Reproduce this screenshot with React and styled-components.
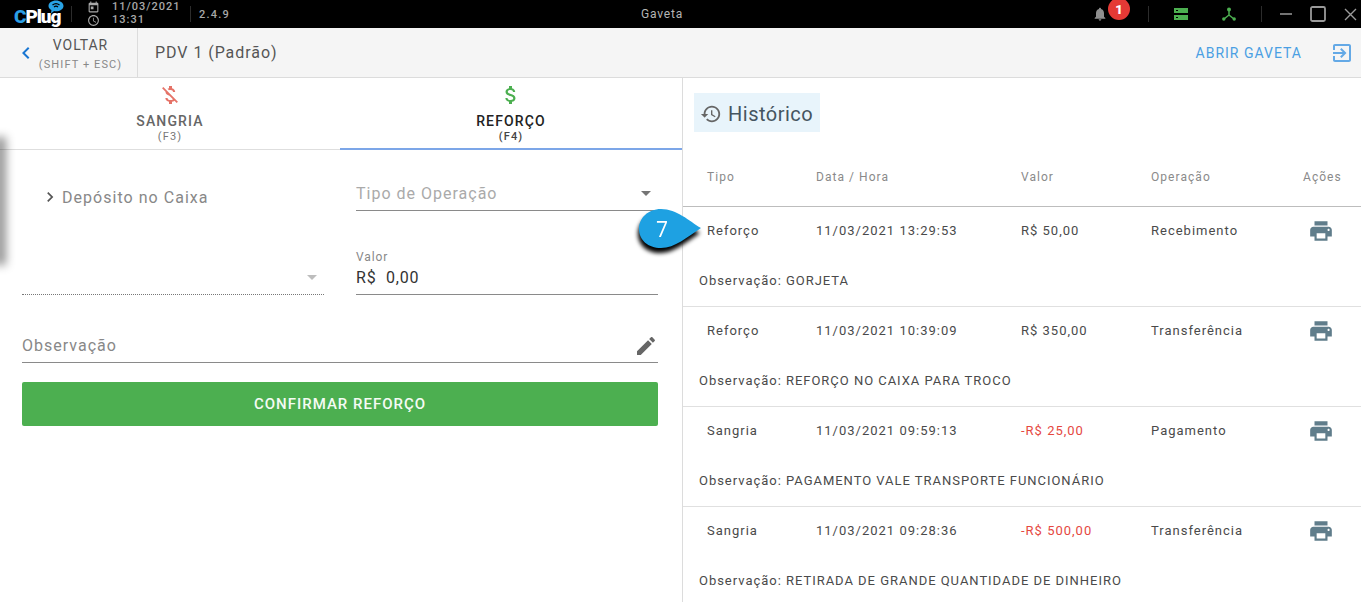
import React from 'react'
import styled, { createGlobalStyle } from 'styled-components'

const paths = {
  print: 'M19 8H5c-1.66 0-3 1.34-3 3v6h4v4h12v-4h4v-6c0-1.66-1.34-3-3-3zm-3 11H8v-5h8v5zm3-7c-.55 0-1-.45-1-1s.45-1 1-1 1 .45 1 1-.45 1-1 1zm-1-9H6v4h12V3z',
  history: 'M13 3c-4.97 0-9 4.03-9 9H1l3.89 3.89.07.14L9 12H6c0-3.87 3.13-7 7-7s7 3.13 7 7-3.13 7-7 7c-1.93 0-3.68-.79-4.94-2.06l-1.42 1.42C8.27 19.99 10.51 21 13 21c4.97 0 9-4.03 9-9s-4.03-9-9-9zm-1 5v5l4.28 2.54.72-1.21-3.5-2.08V8H12z',
  pencil: 'M3 17.25V21h3.75L17.81 9.94l-3.75-3.75L3 17.25zM20.71 7.04c.39-.39.39-1.02 0-1.41l-2.34-2.34c-.39-.39-1.02-.39-1.41 0l-1.83 1.83 3.75 3.75 1.83-1.83z',
  money: 'M11.8 10.9c-2.27-.59-3-1.2-3-2.15 0-1.09 1.01-1.85 2.7-1.85 1.78 0 2.44.85 2.5 2.1h2.21c-.07-1.72-1.12-3.3-3.21-3.81V3h-3v2.16c-1.94.42-3.5 1.68-3.5 3.61 0 2.31 1.91 3.46 4.7 4.13 2.5.6 3 1.48 3 2.41 0 .69-.49 1.79-2.7 1.79-2.06 0-2.87-.92-2.98-2.1h-2.2c.12 2.19 1.76 3.42 3.68 3.83V21h3v-2.15c1.95-.37 3.5-1.5 3.5-3.55 0-2.84-2.43-3.81-4.7-4.4z',
  moneyOff: 'M12.5 6.9c1.78 0 2.44.85 2.5 2.1h2.21c-.07-1.72-1.12-3.3-3.21-3.81V3h-3v2.16c-.53.12-1.03.3-1.48.54l1.47 1.47c.41-.17.91-.27 1.51-.27zM5.33 4.06L4.06 5.33 7.5 8.77c0 2.08 1.56 3.21 3.91 3.91l3.51 3.51c-.34.48-1.05.91-2.42.91-2.06 0-2.87-.92-2.98-2.1h-2.2c.12 2.19 1.76 3.42 3.68 3.83V21h3v-2.15c.96-.18 1.82-.55 2.45-1.12l2.22 2.22 1.27-1.27L5.33 4.06z',
  clock: 'M11.99 2C6.47 2 2 6.48 2 12s4.47 10 9.99 10C17.52 22 22 17.52 22 12S17.52 2 11.99 2zM12 20c-4.42 0-8-3.58-8-8s3.58-8 8-8 8 3.58 8 8-3.58 8-8 8zm.5-13H11v6l5.25 3.15.75-1.23-4.5-2.67z',
  event: 'M19 3h-1V1h-2v2H8V1H6v2H5c-1.11 0-1.99.9-1.99 2L3 19c0 1.1.89 2 2 2h14c1.1 0 2-.9 2-2V5c0-1.1-.9-2-2-2zm0 16H5V8h14v11zM7 10h5v5H7z',
  bell: 'M12 22c1.1 0 2-.9 2-2h-4c0 1.1.89 2 2 2zm6-6v-5c0-3.07-1.64-5.64-4.5-6.32V4c0-.83-.67-1.5-1.5-1.5s-1.5.67-1.5 1.5v.68C7.63 5.36 6 7.92 6 11v5l-2 2v1h16v-1l-2-2z',
  exit: 'M10.09 15.59L11.5 17l5-5-5-5-1.41 1.41L12.67 11H3v2h9.67l-2.58 2.59zM19 3H5c-1.11 0-2 .9-2 2v4h2V5h14v14H5v-4H3v4c0 1.1.89 2 2 2h14c1.1 0 2-.9 2-2V5c0-1.1-.9-2-2-2z',
  right: 'M10 6L8.59 7.41 13.17 12l-4.58 4.59L10 18l6-6z',
  left: 'M15.41 7.41L14 6l-6 6 6 6 1.41-1.41L10.83 12z',
}

const rows = [
  { tipo: 'Reforço', data: '11/03/2021 13:29:53', valor: 'R$ 50,00', op: 'Recebimento', obs: 'GORJETA' },
  { tipo: 'Reforço', data: '11/03/2021 10:39:09', valor: 'R$ 350,00', op: 'Transferência', obs: 'REFORÇO NO CAIXA PARA TROCO' },
  { tipo: 'Sangria', data: '11/03/2021 09:59:13', valor: '-R$ 25,00', op: 'Pagamento', obs: 'PAGAMENTO VALE TRANSPORTE FUNCIONÁRIO', neg: true },
  { tipo: 'Sangria', data: '11/03/2021 09:28:36', valor: '-R$ 500,00', op: 'Transferência', obs: 'RETIRADA DE GRANDE QUANTIDADE DE DINHEIRO', neg: true },
]

const Icon = ({ name, size = 24, color = 'currentColor' }) => (
  <Svg width={size} height={size} viewBox="0 0 24 24" fill={color}>
    <path d={paths[name]} />
  </Svg>
)

const App = () => (
  <Page>
    <GlobalStyle />
    <TopBar>
      <TopLeft>
        <Logo>
          <Bubble width="16" height="14" viewBox="0 0 16 14">
            <path d="M8 0.5c4 0 7.5 2.3 7.5 5.4S12 11.3 8 11.3c-.7 0-1.3-.1-1.9-.2L3 13.5l.4-3.5C1.600 9 .5 7.600.5 5.900.5 2.800 4 .5 8 .5z" fill="#29a3e6" />
            <path d="M4.500 5c2-1.700 5-1.700 7 0M6 7c1.200-1 2.800-1 4 0" stroke="#000" strokeWidth="1.200" fill="none" />
          </Bubble>
          <LogoC>C</LogoC>Plug
        </Logo>
        <TopSep />
        <DateIcons>
          <Icon name="event" size={13} />
          <Icon name="clock" size={13} />
        </DateIcons>
        <DateText>
          <span>11/03/2021</span>
          <span>13:31</span>
        </DateText>
        <TopSep />
        <Version>2.4.9</Version>
      </TopLeft>
      <WindowTitle>Gaveta</WindowTitle>
      <TopRight>
        <BellWrap>
          <Icon name="bell" size={16} color="#8f8f8f" />
          <Badge>1</Badge>
        </BellWrap>
        <TopSep />
        <StatusIcons>
          <svg width="14" height="12" viewBox="0 0 14 12">
            <path d="M0 0h14v5H0zM0 7h14v5H0z" fill="#4caf50" />
            <path d="M2 2h2v1H2zM2 9h2v1H2z" fill="#000" />
          </svg>
          <svg width="14" height="14" viewBox="0 0 14 14">
            <circle cx="7" cy="2.500" r="2" fill="#4caf50" />
            <circle cx="1.800" cy="12" r="1.700" fill="#4caf50" />
            <circle cx="12.200" cy="12" r="1.700" fill="#4caf50" />
            <path d="M7 3v5M7 8l-5 4M7 8l5 4" stroke="#4caf50" strokeWidth="1.500" fill="none" />
          </svg>
        </StatusIcons>
        <TopSep />
        <WindowButtons>
          <svg width="13" height="16" viewBox="0 0 13 16">
            <path d="M1 8h12" stroke="#9a9a9a" strokeWidth="1.500" />
          </svg>
          <svg width="16" height="16" viewBox="0 0 16 16">
            <rect x="1" y="1" width="14" height="14" rx="1.500" fill="none" stroke="#9a9a9a" strokeWidth="1.800" />
          </svg>
          <svg width="13" height="13" viewBox="0 0 13 13">
            <path d="M1 1l11 11M12 1L1 12" stroke="#9a9a9a" strokeWidth="1.400" />
          </svg>
        </WindowButtons>
      </TopRight>
    </TopBar>

    <SubHeader>
      <BackButton>
        <Icon name="left" size={24} color="#1976d2" />
        <BackText>
          <span>VOLTAR</span>
          <small>(SHIFT + ESC)</small>
        </BackText>
      </BackButton>
      <PdvName>PDV 1 (Padrão)</PdvName>
      <OpenDrawer>ABRIR GAVETA</OpenDrawer>
      <Icon name="exit" size={24} color="#64a9e6" />
    </SubHeader>

    <Main>
      <LeftPanel>
        <EdgeShadow />
        <Tabs>
          <Tab>
            <Icon name="moneyOff" size={24} color="#e57368" />
            <TabLabel>SANGRIA</TabLabel>
            <TabKey>(F3)</TabKey>
          </Tab>
          <Tab $active>
            <Icon name="money" size={24} color="#4caf50" />
            <TabLabel $active>REFORÇO</TabLabel>
            <TabKey $active>(F4)</TabKey>
          </Tab>
        </Tabs>
        <Form>
          <FormGrid>
            <Deposit>
              <Icon name="right" size={20} color="#555" />
              Depósito no Caixa
            </Deposit>
            <SelectField>
              <Placeholder>Tipo de Operação</Placeholder>
              <Caret />
            </SelectField>
            <DottedField>
              <Caret $light />
            </DottedField>
            <ValueField>
              <ValueLabel>Valor</ValueLabel>
              <ValueInput>R$&nbsp; 0,00</ValueInput>
            </ValueField>
          </FormGrid>
          <NoteField>
            <Placeholder $dark>Observação</Placeholder>
            <Icon name="pencil" size={24} color="#666" />
          </NoteField>
          <ConfirmButton>CONFIRMAR REFORÇO</ConfirmButton>
        </Form>
      </LeftPanel>

      <RightPanel>
        <Callout>
          <svg width="70" height="50" viewBox="0 0 70 50">
            <path d="M64 21C52 14 40 2 24 2 11 2 2 11 2 22c0 11 9 19 22 19 14 0 26-11 40-20z" fill="#1ea1e2" />
          </svg>
          <CalloutNumber>7</CalloutNumber>
        </Callout>
        <HistoryHeader>
          <HistoryChip>
            <Icon name="history" size={22} color="#666" />
            Histórico
          </HistoryChip>
        </HistoryHeader>
        <TableHead>
          <span>Tipo</span>
          <span>Data / Hora</span>
          <span>Valor</span>
          <span>Operação</span>
          <span>Ações</span>
        </TableHead>
        {rows.map((row) => (
          <Row key={row.data}>
            <RowCells>
              <span>{row.tipo}</span>
              <span>{row.data}</span>
              <Amount $neg={row.neg}>{row.valor}</Amount>
              <span>{row.op}</span>
              <PrintCell>
                <Icon name="print" size={26} color="#607d8b" />
              </PrintCell>
            </RowCells>
            <Note>Observação: {row.obs}</Note>
          </Row>
        ))}
      </RightPanel>
    </Main>
  </Page>
)

const GlobalStyle = createGlobalStyle`
  html, body {
    margin: 0;
    padding: 0;
    height: 100%;
    overflow: hidden;
    background: #fff;
  }
  * { box-sizing: border-box; }
`

const Svg = styled.svg`
  display: block;
  flex: none;
`

const Page = styled.div`
  width: 1361px;
  height: 602px;
  overflow: hidden;
  font-family: Roboto, 'Liberation Sans', sans-serif;
  color: #333;
`

const TopBar = styled.header`
  height: 28px;
  background: #000;
  display: flex;
  align-items: center;
  color: #a8a8a8;
`

const TopLeft = styled.div`
  width: 640px;
  display: flex;
  align-items: center;
  padding-left: 14px;
`

const TopSep = styled.div`
  width: 1px;
  height: 16px;
  background: #2c2c2c;
  flex: none;
`

const Logo = styled.div`
  position: relative;
  width: 57px;
  height: 28px;
  padding-top: 3px;
  font-size: 19px;
  font-weight: 900;
  line-height: 28px;
  letter-spacing: -1.1px;
  color: #fff;
`

const LogoC = styled.span`
  color: #2c9fe6;
`

const Bubble = styled.svg`
  position: absolute;
  left: 34px;
  top: 0;
`

const DateIcons = styled.div`
  margin-left: 15px;
  display: flex;
  flex-direction: column;
  color: #a8a8a8;
`

const DateText = styled.div`
  margin-left: 12px;
  width: 78px;
  padding-bottom: 2px;
  display: flex;
  flex-direction: column;
  font-size: 11px;
  line-height: 13px;
  font-weight: 500;
  letter-spacing: 1px;
  white-space: nowrap;
`

const Version = styled.div`
  margin-left: 8px;
  font-size: 11px;
  font-weight: 500;
  letter-spacing: 1.2px;
`

const WindowTitle = styled.div`
  width: 44px;
  text-align: center;
  font-size: 12px;
  letter-spacing: 0.8px;
  color: #b5b5b5;
  white-space: nowrap;
`

const TopRight = styled.div`
  margin-left: auto;
  display: flex;
  align-items: center;
`

const BellWrap = styled.div`
  position: relative;
  width: 56px;
  height: 28px;
  display: flex;
  align-items: center;
`

const Badge = styled.div`
  position: absolute;
  left: 16px;
  top: -2px;
  width: 22px;
  height: 22px;
  border-radius: 50%;
  background: #e53935;
  color: #fff;
  font-size: 13px;
  font-weight: 900;
  display: flex;
  align-items: center;
  justify-content: center;
`

const StatusIcons = styled.div`
  width: 112px;
  padding: 0 25px;
  display: flex;
  align-items: center;
  justify-content: space-between;
`

const WindowButtons = styled.div`
  display: flex;
  align-items: center;
  gap: 18px;
  margin-left: 17px;
  margin-right: 4px;
`

const SubHeader = styled.div`
  height: 50px;
  background: #f5f5f5;
  border-bottom: 1px solid #dcdcdc;
  display: flex;
  align-items: center;
  padding-right: 7px;
`

const BackButton = styled.div`
  width: 138px;
  height: 100%;
  border-right: 1px solid #dcdcdc;
  display: flex;
  align-items: center;
  padding-left: 14px;
`

const BackText = styled.div`
  width: 85px;
  padding-top: 2px;
  display: flex;
  flex-direction: column;
  align-items: center;
  font-size: 14px;
  line-height: 16px;
  letter-spacing: 0.95px;
  color: #555;

  small {
    margin-top: 5px;
    font-size: 11px;
    line-height: 13px;
    letter-spacing: 1.1px;
    color: #888;
    white-space: nowrap;
  }
`

const PdvName = styled.div`
  margin-left: 17px;
  font-size: 16px;
  letter-spacing: 0.95px;
  color: #555;
`

const OpenDrawer = styled.div`
  margin-left: auto;
  margin-right: 28px;
  font-size: 14px;
  letter-spacing: 1px;
  color: #4a9fe3;
`

const Main = styled.div`
  display: flex;
  height: 524px;
`

const LeftPanel = styled.section`
  position: relative;
  width: 683px;
  flex: none;
  border-right: 1px solid #dcdcdc;
`

const EdgeShadow = styled.div`
  position: absolute;
  left: -6px;
  top: 62px;
  width: 6px;
  height: 122px;
  box-shadow: 3px 0 10px 3px rgba(0, 0, 0, 0.42);
`

const Tabs = styled.div`
  display: grid;
  grid-template-columns: 340px 342px;
  height: 72px;
`

const Tab = styled.div`
  display: flex;
  flex-direction: column;
  align-items: center;
  padding-top: 5px;
  border-bottom: ${(p) => (p.$active ? '2px solid #7ca6e8' : '1px solid #dedede')};
`

const TabLabel = styled.div`
  margin-top: 7px;
  font-size: 14px;
  font-weight: 500;
  line-height: 15px;
  letter-spacing: 1.15px;
  color: ${(p) => (p.$active ? '#222' : '#666')};
`

const TabKey = styled.div`
  margin-top: 1px;
  font-size: 11px;
  line-height: 14px;
  letter-spacing: 1.1px;
  font-weight: ${(p) => (p.$active ? 500 : 400)};
  color: ${(p) => (p.$active ? '#444' : '#777')};
`

const Form = styled.div`
  padding: 0 24px 0 22px;
`

const FormGrid = styled.div`
  display: grid;
  grid-template-columns: 302px 302px;
  column-gap: 32px;
  grid-template-rows: 61px 84px;
`

const Deposit = styled.div`
  display: flex;
  align-items: center;
  gap: 2px;
  height: 20px;
  margin-top: 37px;
  padding-left: 18px;
  font-size: 16px;
  letter-spacing: 1.03px;
  color: #888;
`

const SelectField = styled.div`
  display: flex;
  align-items: center;
  justify-content: space-between;
  height: 61px;
  padding-top: 34px;
  padding-bottom: 8px;
  border-bottom: 1px solid #8a8a8a;
`

const Placeholder = styled.span`
  font-size: 16px;
  letter-spacing: 1px;
  color: ${(p) => (p.$dark ? '#888' : '#aaa')};
`

const Caret = styled.div`
  width: 0;
  height: 0;
  margin-right: 7px;
  border-left: 5px solid transparent;
  border-right: 5px solid transparent;
  border-top: 5px solid ${(p) => (p.$light ? '#bdbdbd' : '#757575')};
`

const DottedField = styled.div`
  align-self: end;
  height: 40px;
  display: flex;
  justify-content: flex-end;
  padding-top: 20px;
  border-bottom: 1px dotted #777;
`

const ValueField = styled.div`
  align-self: end;
  height: 44px;
  border-bottom: 1px solid #8a8a8a;
`

const ValueLabel = styled.div`
  font-size: 12px;
  line-height: 12px;
  letter-spacing: 0.9px;
  color: #888;
`

const ValueInput = styled.div`
  margin-top: 5px;
  font-size: 16px;
  line-height: 20px;
  letter-spacing: 0.8px;
  color: #333;
`

const NoteField = styled.div`
  height: 42px;
  margin-top: 26px;
  padding-top: 8px;
  display: flex;
  align-items: center;
  justify-content: space-between;
  border-bottom: 1px solid #8a8a8a;
`

const ConfirmButton = styled.div`
  height: 44px;
  margin-top: 19px;
  border-radius: 2px;
  background: #4caf50;
  color: #f4fbf4;
  display: flex;
  align-items: center;
  justify-content: center;
  font-size: 15px;
  font-weight: 500;
  letter-spacing: 1px;
`

const RightPanel = styled.section`
  position: relative;
  flex: 1;
  min-width: 0;
`

const Callout = styled.div`
  position: absolute;
  left: -46px;
  top: 129px;
  width: 70px;
  height: 50px;
  z-index: 2;
  filter: drop-shadow(-1px 5px 2px #000);
`

const CalloutNumber = styled.div`
  position: absolute;
  left: 0;
  top: 0;
  width: 50px;
  height: 44px;
  display: flex;
  align-items: center;
  justify-content: center;
  color: #fff;
  font-family: 'Open Sans', sans-serif;
  font-size: 21px;
`

const HistoryHeader = styled.div`
  height: 72px;
  padding: 15px 0 0 11px;
`

const HistoryChip = styled.div`
  display: inline-flex;
  align-items: center;
  gap: 6px;
  width: 126px;
  height: 39px;
  padding: 2px 0 0 6px;
  background: #e8f4fb;
  font-size: 20px;
  letter-spacing: 0.5px;
  color: #455560;
  white-space: nowrap;
`

const columns = `
  display: grid;
  grid-template-columns: 109px 205px 130px 152px 1fr;
  padding-left: 24px;
  white-space: nowrap;
`

const TableHead = styled.div`
  ${columns}
  height: 57px;
  padding-top: 20px;
  border-bottom: 1px solid #bdbdbd;
  font-size: 12px;
  letter-spacing: 1.05px;
  color: #8a8a8a;
`

const Row = styled.div`
  height: 100px;
  border-bottom: 1px solid #e0e0e0;
`

const RowCells = styled.div`
  ${columns}
  height: 46px;
  align-items: center;
  font-size: 13px;
  letter-spacing: 1px;
  color: #4a4a4a;
`

const Amount = styled.span`
  color: ${(p) => (p.$neg ? '#e5483f' : '#4a4a4a')};
`

const PrintCell = styled.span`
  margin: 2px 0 0 5px;
`

const Note = styled.div`
  margin-top: 20px;
  padding-left: 16px;
  font-size: 13px;
  line-height: 16px;
  letter-spacing: 0.97px;
  color: #4a4a4a;
  white-space: nowrap;
`

export default App
